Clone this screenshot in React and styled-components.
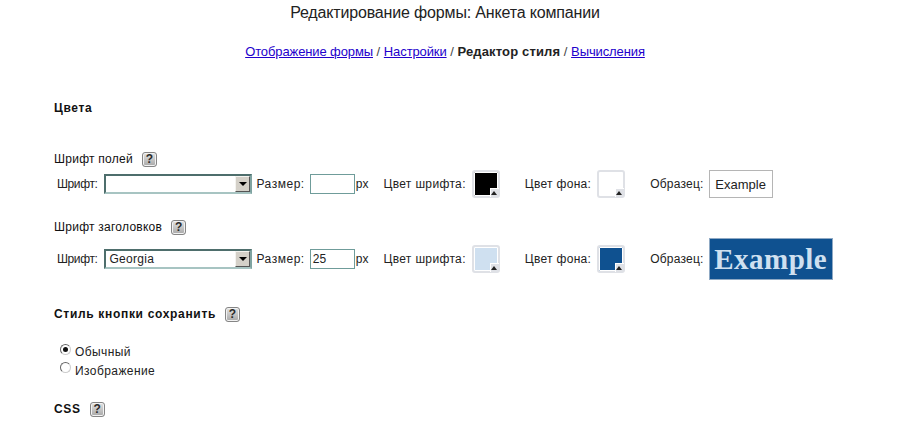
import React from 'react';
import styled, { createGlobalStyle } from 'styled-components';

const Global = createGlobalStyle`
  html, body { margin: 0; padding: 0; background: #fff; }
  body { font-family: "Liberation Sans", Arial, sans-serif; font-size: 12px; color: #111; overflow: hidden; }
`;
const Page = styled.div`
  width: 890px; height: 429px; overflow: hidden;
`;
const Title = styled.h1`
  margin: 0; padding-top: 3px; height: 19px; line-height: 19px; letter-spacing: -0.16px;
  font-size: 16px; font-weight: normal; text-align: center; color: #222;
`;
const Nav = styled.nav`
  margin-top: 22px; height: 16px; line-height: 16px; font-size: 13px; text-align: center; color: #444;
  a { color: #2200cc; text-decoration: underline; letter-spacing: -0.11px; }
  b { color: #222; letter-spacing: 0.15px; }
`;
const Content = styled.div`
  padding-left: 54px;
`;
const Heading = styled.div`
  display: flex; align-items: center; gap: 9px;
  font-size: 12px; font-weight: ${p => (p.$bold ? 'bold' : 'normal')};
  letter-spacing: ${p => (p.$bold ? '0.68px' : '0.25px')};
  height: 16px; line-height: 16px; margin-top: ${p => p.$top}px; color: #111;
`;
const Help = styled.span`
  box-sizing: border-box; width: 15px; height: 15px; border-radius: 3px;
  background: linear-gradient(#e2e2e2, #a8a8a8); border: 1px solid #858585;
  box-shadow: inset 0 0 0 1px #f2f2f2;
  display: inline-flex; align-items: center; justify-content: center;
  font: bold 12px/1 "Liberation Sans", sans-serif; color: #2a2a2a; letter-spacing: 0;
`;
const Row = styled.div`
  display: flex; align-items: center; height: ${p => p.$h}px; margin-top: ${p => p.$top}px;
  margin-left: ${p => p.$left}px; font-size: 12px; color: #222;
`;
const Label = styled.span`
  margin-left: ${p => p.$ml || 0}px; white-space: nowrap; letter-spacing: ${p => p.$ls || 0}px;
`;
const Select = styled.div`
  box-sizing: border-box; width: 148px; height: 20px; margin-left: 7px;
  border: 2px solid #4e6e6c; border-right-color: #7fa3a1; border-bottom-color: #a7c4c2;
  display: flex; align-items: stretch; background: #fff; font-size: 12px; color: #222;
`;
const SelectText = styled.span`
  flex: 1; padding-left: 3px; line-height: 16px; letter-spacing: 0.3px;
`;
const Arrow = styled.span`
  box-sizing: border-box; width: 15px; background: #d4d0c8;
  border: 1px solid; border-color: #f4f3ef #555 #555 #f4f3ef;
  display: flex; align-items: center; justify-content: center;
  &::after { content: ""; border: 4px solid transparent; border-top: 4px solid #000; border-bottom: 0; }
`;
const SizeInput = styled.div`
  box-sizing: border-box; width: 45px; height: 20px; margin-left: 5px;
  border: 1px solid #6f9c9a; padding-left: 2px; line-height: 18px; font-size: 12px; color: #222;
`;
const Swatch = styled.span`
  box-sizing: border-box; position: relative; display: block; width: 28px; height: 28px;
  margin-left: ${p => p.$ml}px; background: ${p => p.$color};
  border: 2px solid #dfe1e6; border-radius: 3px; box-shadow: inset 0 0 0 1px #fff;
  &::after {
    content: ""; position: absolute; right: -1px; bottom: -1px; width: 8px; height: 8px;
    background: #dfe1e6; border: solid #fff; border-width: 1px 0 0 1px;
  }
  &::before {
    content: ""; position: absolute; right: 1px; bottom: 1px; z-index: 1;
    border: 3.5px solid transparent; border-bottom: 4px solid #222; border-top: 0;
  }
`;
const Sample = styled.div`
  box-sizing: border-box; margin-left: 5px; display: flex; align-items: center; justify-content: center;
  width: ${p => p.$w}px; height: ${p => p.$h}px; background: ${p => p.$bg};
  border: 1px solid ${p => p.$border}; color: ${p => p.$fg};
  font-family: ${p => (p.$serif ? '"Liberation Serif", Georgia, serif' : '"Liberation Sans", sans-serif')};
  font-size: ${p => p.$size}px; font-weight: ${p => (p.$serif ? 'bold' : 'normal')};
  letter-spacing: ${p => (p.$serif ? '0.5px' : '0')};
`;
const Radios = styled.div`
  margin-left: 6px; margin-top: 21px; font-size: 12px; color: #222; letter-spacing: 0.42px;
`;
const RadioRow = styled.div`
  display: flex; align-items: center; gap: 4px; height: 18.5px;
`;
const Radio = styled.span`
  box-sizing: border-box; width: 11px; height: 11px; border-radius: 50%; position: relative; top: -3px;
  border: 1px solid #666; border-bottom-color: #ccc; border-right-color: #ccc; background: #fff;
  display: flex; align-items: center; justify-content: center;
  &::after { content: ""; width: 5px; height: 5px; border-radius: 50%; background: ${p => (p.$on ? '#111' : 'transparent')}; }
`;

const Fields = ({ font, size, c1, c2, h, children }) => (
  <Row $left={3} $top={3} $h={h}>
    <Label $ls={-0.4}>Шрифт:</Label>
    <Select><SelectText>{font}</SelectText><Arrow /></Select>
    <Label $ml={4} $ls={0.53}>Размер:</Label>
    <SizeInput>{size}</SizeInput>
    <Label $ml={1}>px</Label>
    <Label $ml={15} $ls={0.35}>Цвет шрифта:</Label>
    <Swatch $ml={6} $color={c1} />
    <Label $ml={25} $ls={0.3}>Цвет фона:</Label>
    <Swatch $ml={6} $color={c2} />
    <Label $ml={25} $ls={0.22}>Образец:</Label>
    {children}
  </Row>
);

export default function App() {
  return (
    <Page>
      <Global />
      <Title>Редактирование формы: Анкета компании</Title>
      <Nav>
        <a href="#a">Отображение формы</a> / <a href="#b">Настройки</a> / <b>Редактор стиля</b> / <a href="#c">Вычисления</a>
      </Nav>
      <Content>
        <Heading $bold $top={40}>Цвета</Heading>
        <Heading $top={35}>Шрифт полей <Help>?</Help></Heading>
        <Fields h={28} c1="#000000" c2="#ffffff" font="" size="">
          <Sample $w={64} $h={28} $bg="#fff" $border="#b5b5b5" $fg="#222" $size={13}>Example</Sample>
        </Fields>
        <Heading $top={21}>Шрифт заголовков <Help>?</Help></Heading>
        <Fields h={42} c1="#cfe0f0" c2="#0f5190" font="Georgia" size="25">
          <Sample $w={124} $h={42} $bg="#0f5190" $border="#8fa9c4" $fg="#cfe0f0" $size={29} $serif>Example</Sample>
        </Fields>
        <Heading $bold $top={26}>Стиль кнопки сохранить <Help>?</Help></Heading>
        <Radios>
          <RadioRow><Radio $on /><span>Обычный</span></RadioRow>
          <RadioRow><Radio /><span>Изображение</span></RadioRow>
        </Radios>
        <Heading $bold $top={21}>CSS <Help>?</Help></Heading>
      </Content>
    </Page>
  );
}
